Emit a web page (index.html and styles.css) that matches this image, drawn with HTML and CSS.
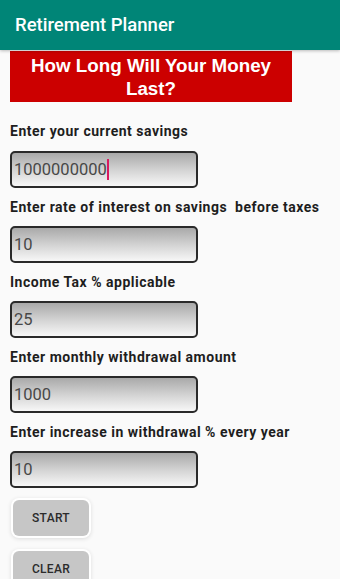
FILE: index.html
```html
<!DOCTYPE html>
<html>
<head>
<meta charset="utf-8">
<link rel="stylesheet" href="styles.css">
</head>
<body>
<div class="appbar">Retirement Planner</div>
<div class="content">
  <div class="banner">How Long Will Your Money<br>Last?</div>
  <div class="label first">Enter your current savings</div>
  <div class="field"><span class="val">1000000000</span><span class="cursor"></span></div>
  <div class="label">Enter rate of interest on savings&nbsp; before taxes</div>
  <div class="field"><span class="val">10</span></div>
  <div class="label">Income Tax % applicable</div>
  <div class="field"><span class="val">25</span></div>
  <div class="label">Enter monthly withdrawal amount</div>
  <div class="field"><span class="val">1000</span></div>
  <div class="label">Enter increase in withdrawal % every year</div>
  <div class="field"><span class="val">10</span></div>
  <div class="buttons">
    <div class="btn">START</div>
    <div class="btn">CLEAR</div>
  </div>
</div>
</body>
</html>
```
FILE: styles.css
```css
html, body {
  margin: 0;
  padding: 0;
  background: #fafafa;
  font-family: Roboto, "Liberation Sans", sans-serif;
  overflow: hidden;
  height: 579px;
}
.appbar {
  height: 50px;
  background: #008577;
  color: #fff;
  font-size: 18.5px;
  font-weight: 500;
  display: flex;
  align-items: center;
  padding-left: 15px;
  box-shadow: 0 1px 3px rgba(0,0,0,0.25);
  position: relative;
  z-index: 1;
}
.content {
  padding-left: 10px;
  display: flex;
  flex-direction: column;
  align-items: flex-start;
}
.banner {
  margin-top: 1px;
  width: 282px;
  height: 51px;
  background: #cc0000;
  color: #fff;
  font-family: "Liberation Sans", Arial, sans-serif;
  font-weight: bold;
  font-size: 18.8px;
  line-height: 23px;
  text-align: center;
  display: flex;
  flex-direction: column;
  justify-content: center;
}
.label {
  height: 38px;
  display: flex;
  align-items: center;
  font-size: 14px;
  font-weight: 700;
  letter-spacing: 0.5px;
  color: #1e1e1e;
  white-space: nowrap;
}
.label.first {
  margin-top: 9px;
  height: 40px;
}
.field {
  box-sizing: border-box;
  width: 188px;
  height: 37px;
  border: 2px solid #2a2a2a;
  border-radius: 5px;
  background: linear-gradient(to bottom, #a9a9a9 0%, #d6d6d6 55%, #f7f7f7 100%);
  display: flex;
  align-items: center;
  padding-left: 2px;
  font-size: 16.5px;
  color: #484848;
}
.cursor {
  display: inline-block;
  width: 2px;
  height: 21px;
  background: #d81b60;
  margin-left: 0;
}
.buttons {
  display: flex;
  flex-direction: column;
  gap: 15px;
  margin-top: 12px;
  margin-left: 3px;
}
.btn {
  width: 76px;
  height: 36px;
  background: #c6c6c6;
  border-radius: 6px;
  box-shadow: 0 0 0 2px #ffffff, 0 1px 4px 2px rgba(0,0,0,0.12);
  display: flex;
  align-items: center;
  justify-content: center;
  font-size: 12px;
  font-weight: 500;
  color: #2b2b2b;
  letter-spacing: 0.3px;
}
```
